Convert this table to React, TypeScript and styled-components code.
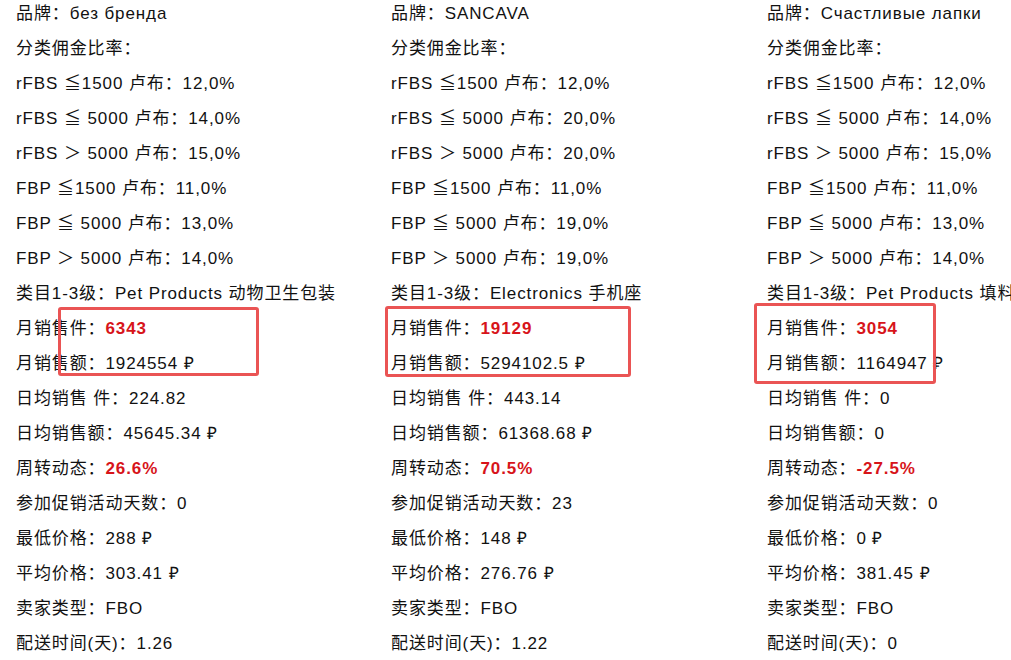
import React from "react";
import styled, { createGlobalStyle } from "styled-components";

const Global = createGlobalStyle`
  html, body { margin: 0; padding: 0; background: #fff; overflow: hidden; }
  body { font-family: "Liberation Sans", "Noto Sans CJK SC", sans-serif; color: #111; }
`;

const Page = styled.div`
  width: 1011px;
  height: 660px;
  overflow: hidden;
  display: grid;
  grid-template-columns: 375px 376px 376px;
  padding-left: 16px;
  box-sizing: border-box;
  margin-top: -4px;
`;

const Column = styled.div`
  position: relative;
  display: flex;
  flex-direction: column;
  white-space: nowrap;
`;

const Row = styled.div`
  height: 35px;
  line-height: 35px;
  font-size: 17px;
  letter-spacing: 0.9px;
`;

const Hot = styled.span`
  color: #d7141a;
  font-weight: bold;
`;

const Frame = styled.div<{ $l: number; $t: number; $w: number; $h: number }>`
  position: absolute;
  left: ${(p) => p.$l}px;
  top: ${(p) => p.$t}px;
  width: ${(p) => p.$w}px;
  height: ${(p) => p.$h}px;
  border: 3px solid #ea5454;
  border-radius: 3px;
  box-sizing: border-box;
`;

type Col = {
  brand: string;
  r: string[];
  cat: string;
  units: string;
  amount: string;
  dayUnits: string;
  dayAmount: string;
  turn: string;
  promo: string;
  minP: string;
  avgP: string;
  delivery: string;
  frame: [number, number, number, number];
};

const cols: Col[] = [
  {
    brand: "без бренда",
    r: ["12,0%", "14,0%", "15,0%", "11,0%", "13,0%", "14,0%"],
    cat: "Pet Products 动物卫生包装",
    units: "6343",
    amount: "1924554 ₽",
    dayUnits: "224.82",
    dayAmount: "45645.34 ₽",
    turn: "26.6%",
    promo: "0",
    minP: "288 ₽",
    avgP: "303.41 ₽",
    delivery: "1.26",
    frame: [42, 311, 201, 69],
  },
  {
    brand: "SANCAVA",
    r: ["12,0%", "20,0%", "20,0%", "11,0%", "19,0%", "19,0%"],
    cat: "Electronics 手机座",
    units: "19129",
    amount: "5294102.5 ₽",
    dayUnits: "443.14",
    dayAmount: "61368.68 ₽",
    turn: "70.5%",
    promo: "23",
    minP: "148 ₽",
    avgP: "276.76 ₽",
    delivery: "1.22",
    frame: [-6, 310, 246, 71],
  },
  {
    brand: "Счастливые лапки",
    r: ["12,0%", "14,0%", "15,0%", "11,0%", "13,0%", "14,0%"],
    cat: "Pet Products 填料",
    units: "3054",
    amount: "1164947 ₽",
    dayUnits: "0",
    dayAmount: "0",
    turn: "-27.5%",
    promo: "0",
    minP: "0 ₽",
    avgP: "381.45 ₽",
    delivery: "0",
    frame: [-13, 307, 182, 81],
  },
];

const tiers = [
  "rFBS ≦1500 卢布：",
  "rFBS ≦ 5000 卢布：",
  "rFBS ＞ 5000 卢布：",
  "FBP ≦1500 卢布：",
  "FBP ≦ 5000 卢布：",
  "FBP ＞ 5000 卢布：",
];

export default function App() {
  return (
    <>
      <Global />
      <Page>
        {cols.map((c, i) => (
          <Column key={i}>
            <Row>品牌：{c.brand}</Row>
            <Row>分类佣金比率：</Row>
            {tiers.map((t, j) => (
              <Row key={j}>
                {t}
                {c.r[j]}
              </Row>
            ))}
            <Row>类目1-3级：{c.cat}</Row>
            <Row>
              月销售件：<Hot>{c.units}</Hot>
            </Row>
            <Row>月销售额：{c.amount}</Row>
            <Row>日均销售 件：{c.dayUnits}</Row>
            <Row>日均销售额：{c.dayAmount}</Row>
            <Row>
              周转动态：<Hot>{c.turn}</Hot>
            </Row>
            <Row>参加促销活动天数：{c.promo}</Row>
            <Row>最低价格：{c.minP}</Row>
            <Row>平均价格：{c.avgP}</Row>
            <Row>卖家类型：FBO</Row>
            <Row>配送时间(天)：{c.delivery}</Row>
            <Frame $l={c.frame[0]} $t={c.frame[1]} $w={c.frame[2]} $h={c.frame[3]} />
          </Column>
        ))}
      </Page>
    </>
  );
}
